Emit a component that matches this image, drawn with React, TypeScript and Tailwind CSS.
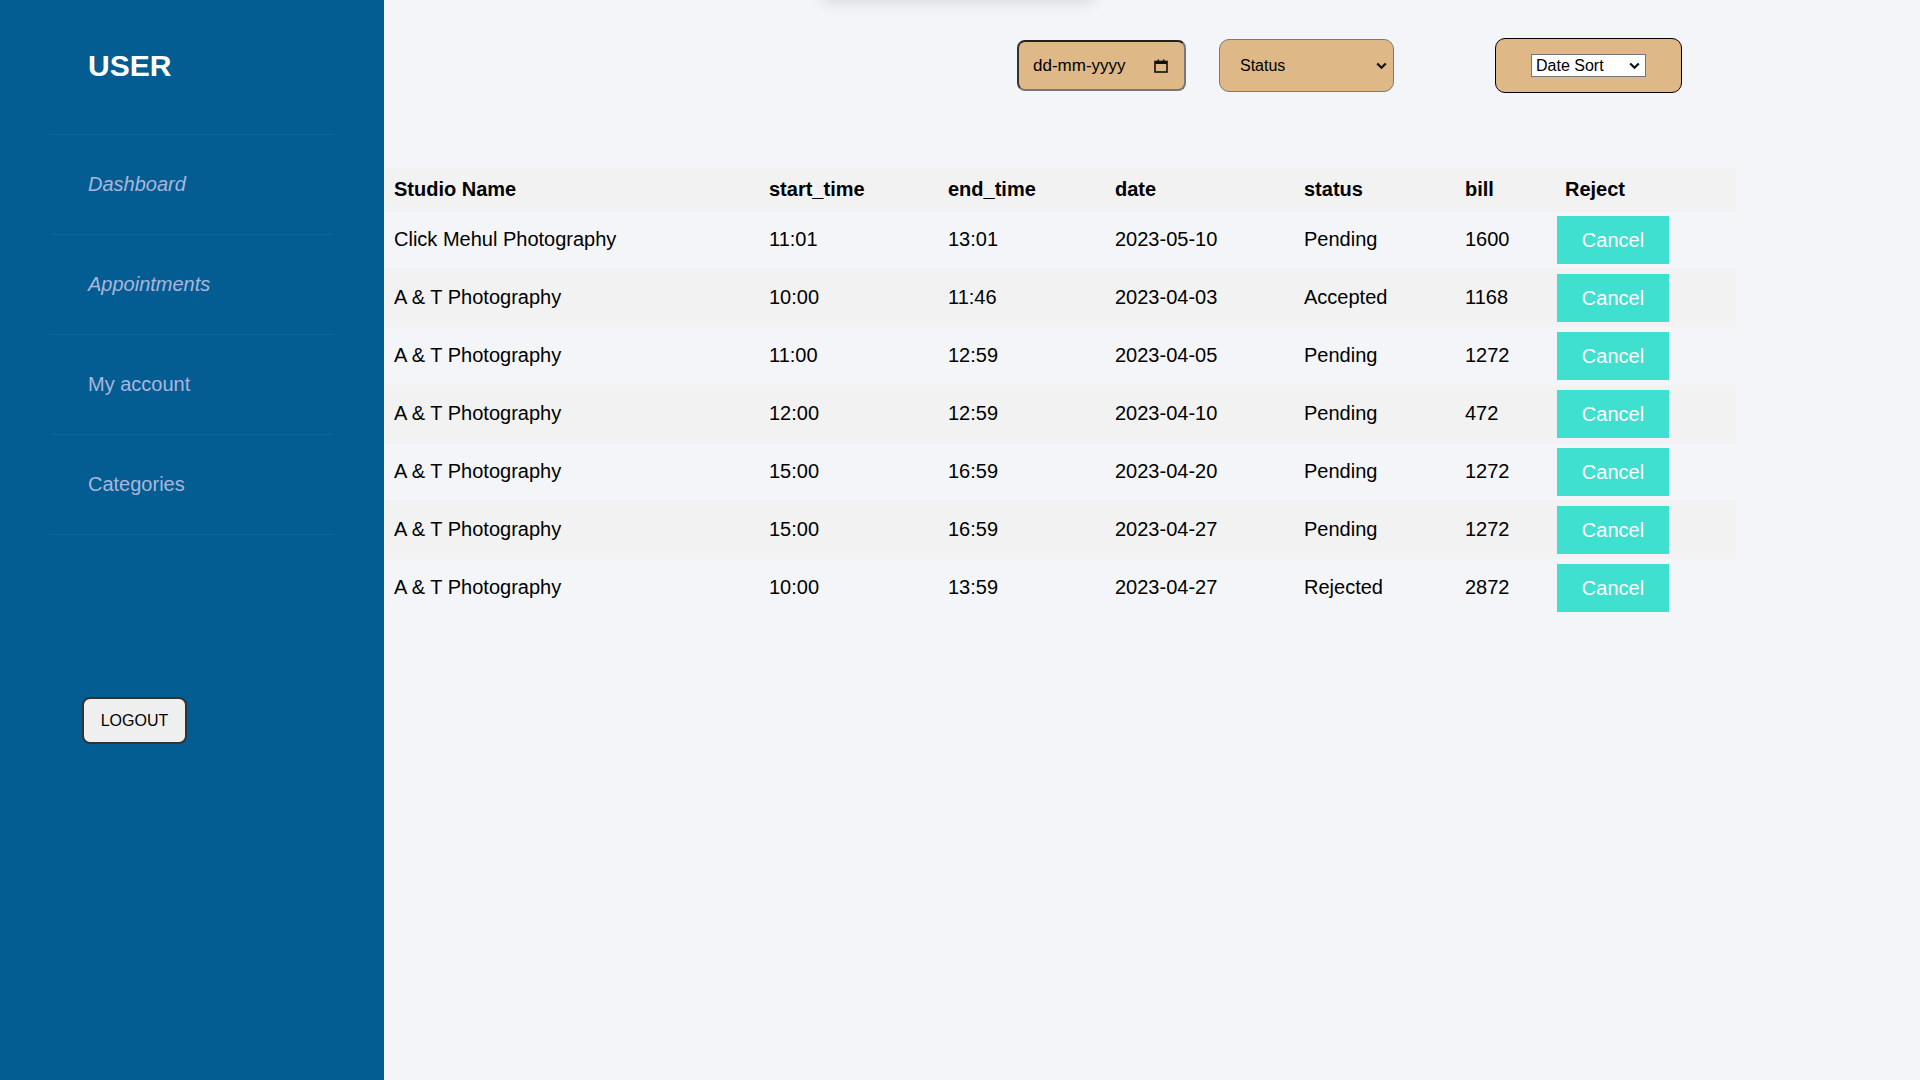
import React from "react";

const rows = [
  ["Click Mehul Photography", "11:01", "13:01", "2023-05-10", "Pending", "1600"],
  ["A & T Photography", "10:00", "11:46", "2023-04-03", "Accepted", "1168"],
  ["A & T Photography", "11:00", "12:59", "2023-04-05", "Pending", "1272"],
  ["A & T Photography", "12:00", "12:59", "2023-04-10", "Pending", "472"],
  ["A & T Photography", "15:00", "16:59", "2023-04-20", "Pending", "1272"],
  ["A & T Photography", "15:00", "16:59", "2023-04-27", "Pending", "1272"],
  ["A & T Photography", "10:00", "13:59", "2023-04-27", "Rejected", "2872"],
];

const Chevron = () => (
  <svg width="11" height="8" viewBox="0 0 11 8" fill="none">
    <path d="M1.2 1.5 L5.5 5.8 L9.8 1.5" stroke="#111" strokeWidth="2.2" />
  </svg>
);

const Calendar = () => (
  <svg width="14" height="14" viewBox="0 0 14 14" fill="none">
    <rect x="1" y="2.5" width="12" height="10.5" stroke="#111" strokeWidth="1.6" fill="none" />
    <rect x="1" y="2.5" width="12" height="2.5" fill="#111" />
    <rect x="3.5" y="0.5" width="1.6" height="2.5" fill="#111" />
    <rect x="8.9" y="0.5" width="1.6" height="2.5" fill="#111" />
  </svg>
);

export default function App() {
  const nav = [
    { label: "Dashboard", italic: true },
    { label: "Appointments", italic: true },
    { label: "My account", italic: false },
    { label: "Categories", italic: false },
  ];
  return (
    <div
      className="flex min-h-[1080px] w-full bg-[#f4f5f9]"
      style={{ fontFamily: '"Liberation Sans", Arial, sans-serif' }}
    >
      <aside className="w-[384px] shrink-0 bg-[#035d92] flex flex-col">
        <div className="h-[134px] pl-[88px] pt-[49px]">
          <h1 className="text-[30px] font-bold text-white leading-[34px]">USER</h1>
        </div>
        <ul className="mx-[50px] border-t border-[#0f6599]">
          {nav.map((n) => (
            <li
              key={n.label}
              className="h-[100px] flex items-center pl-[38px] pb-[2px] border-b border-[#0f6599]"
            >
              <span
                className={`text-[20px] text-[#a9b6dc] ${n.italic ? "italic" : ""}`}
              >
                {n.label}
              </span>
            </li>
          ))}
        </ul>
        <div className="pl-[82px] mt-[162px]">
          <button className="w-[105px] h-[47px] rounded-[8px] border-2 border-[#333] bg-[#efefef] text-[16px] text-black">
            LOGOUT
          </button>
        </div>
      </aside>

      <main className="relative flex-1">
        <div className="absolute left-[436px] top-[-60px] h-[60px] w-[276px] rounded-[10px] bg-[#f4f5f9] shadow-[0_4px_14px_rgba(0,0,0,0.10)]" />
        <div className="flex items-center h-[55px] mt-[38px] pl-[633px]">
          <div className="flex items-center justify-between w-[169px] h-[51px] rounded-[8px] border-2 border-t-[#222] border-l-[#333] border-b-[#777] border-r-[#777] bg-[#deb887] pl-[14px] pr-[16px]">
            <span className="text-[17px] text-black">dd-mm-yyyy</span>
            <Calendar />
          </div>
          <div className="ml-[33px] flex items-center justify-between w-[175px] h-[53px] rounded-[10px] border border-[#7a7a7a] bg-[#deb887] pl-[20px] pr-[6px]">
            <span className="text-[16px] text-black">Status</span>
            <Chevron />
          </div>
          <div className="ml-[101px] flex items-center justify-center w-[187px] h-[55px] rounded-[10px] border border-black bg-[#deb887]">
            <div className="flex items-center justify-between w-[115px] h-[23px] bg-white border border-[#767676] pl-[4px] pr-[5px]">
              <span className="text-[16px] text-black leading-none">Date Sort</span>
              <Chevron />
            </div>
          </div>
        </div>

        <table className="mt-[75px] w-[1352px] table-fixed border-collapse text-black">
          <colgroup>
            <col className="w-[375px]" />
            <col className="w-[179px]" />
            <col className="w-[167px]" />
            <col className="w-[189px]" />
            <col className="w-[161px]" />
            <col className="w-[92px]" />
            <col className="w-[189px]" />
          </colgroup>
          <thead>
            <tr className="h-[43px] bg-[#f2f2f2] text-left text-[20px] font-bold">
              <th className="pl-[10px] pb-[2px]">Studio Name</th>
              <th className="pl-[10px] pb-[2px]">start_time</th>
              <th className="pl-[10px] pb-[2px]">end_time</th>
              <th className="pl-[10px] pb-[2px]">date</th>
              <th className="pl-[10px] pb-[2px]">status</th>
              <th className="pl-[10px] pb-[2px]">bill</th>
              <th className="pl-[18px] pb-[2px]">Reject</th>
            </tr>
          </thead>
          <tbody>
            {rows.map((r, i) => (
              <tr
                key={i}
                className={`h-[58px] text-[20px] ${i % 2 === 1 ? "bg-[#f2f2f2]" : ""}`}
              >
                {r.map((c, j) => (
                  <td key={j} className="pl-[10px] pb-[2px]">
                    {c}
                  </td>
                ))}
                <td className="pl-[10px]">
                  <button className="w-[112px] h-[48px] bg-[#40e0d0] text-white text-[20px]">
                    Cancel
                  </button>
                </td>
              </tr>
            ))}
          </tbody>
        </table>
      </main>
    </div>
  );
}
